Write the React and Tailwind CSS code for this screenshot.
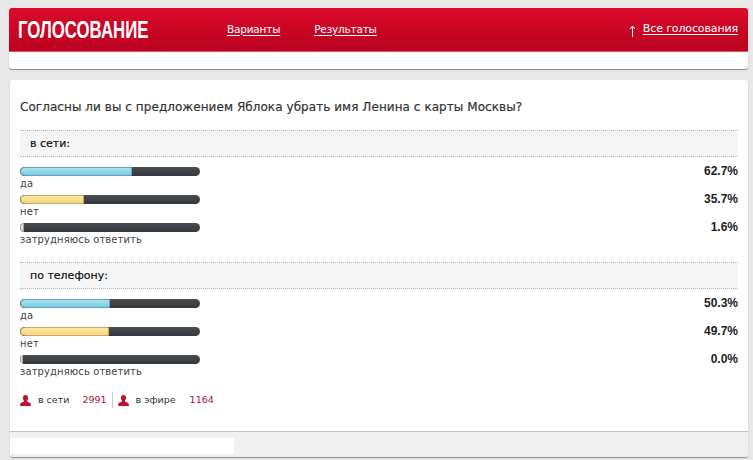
import React from 'react'

const online = [
    { label: 'да', value: '62.7%', width: 'w-[112px]', color: 'bg-gradient-to-b from-[#a8e2f2] to-[#79cbe0] border-[#5fa9bb]' },
    { label: 'нет', value: '35.7%', width: 'w-[64px]', color: 'bg-gradient-to-b from-[#fde6a6] to-[#f7d47f] border-[#c9a95f]' },
    { label: 'затрудняюсь ответить', value: '1.6%', width: 'w-[4px]', color: 'bg-gradient-to-b from-[#eeeeee] to-[#d4d4d4] border-[#aaaaaa]' },
]

const phone = [
    { label: 'да', value: '50.3%', width: 'w-[90px]', color: 'bg-gradient-to-b from-[#a8e2f2] to-[#79cbe0] border-[#5fa9bb]' },
    { label: 'нет', value: '49.7%', width: 'w-[89px]', color: 'bg-gradient-to-b from-[#fde6a6] to-[#f7d47f] border-[#c9a95f]' },
    { label: 'затрудняюсь ответить', value: '0.0%', width: 'w-[3px]', color: 'bg-gradient-to-b from-[#eeeeee] to-[#d4d4d4] border-[#aaaaaa]' },
]

const UserIcon = () => (
    <svg width="11" height="11" viewBox="0 0 12 11" preserveAspectRatio="none" className="shrink-0">
        <path d="M6 0C4.200 0 3.200 1.300 3.200 3c0 1.200.5 2.200 1.200 2.800v.8C3 7.200.6 7.600.2 9v2h11.600V9c-.4-1.400-2.800-1.800-4.200-2.400v-.8c.7-.6 1.200-1.600 1.200-2.800C8.800 1.300 7.800 0 6 0z" fill="#c1122f" />
    </svg>
)

const Section = ({ title, rows }) => (
    <div>
        <div className="h-[27px] border-y border-dotted border-[#b5b5b5] bg-[#f6f6f6] pl-[10px] text-[11px] leading-[26px] text-[#111] [-webkit-text-stroke:0.2px_#111]">{title}</div>
        <div className="mt-[10px] flex flex-col">
            {rows.map((row) => (
                <div key={row.label} className="flex h-[28px] justify-between">
                    <div>
                        <div className="h-[9px] w-[180px] overflow-hidden rounded-full bg-gradient-to-b from-[#4a4d50] to-[#33363a]">
                            <div className={`h-[9px] rounded-l-full rounded-r-[2px] border ${row.width} ${row.color}`}></div>
                        </div>
                        <div className="text-[10px] leading-[16px] tracking-[0.1px] text-[#444]">{row.label}</div>
                    </div>
                    <div className="-mt-[3px] font-['Liberation_Sans',sans-serif] text-[12px] leading-[14px] font-bold text-[#222]">{row.value}</div>
                </div>
            ))}
        </div>
    </div>
)

export default function App() {
    return (
        <div className="h-[460px] overflow-hidden bg-[#e8e8e8] pt-[8px] font-['DejaVu_Sans',sans-serif]">
            {/* Header */}
            <div className="mr-[5px] ml-[9px] rounded-[3px] bg-white shadow-[0_1px_1px_#8a8a8a]">
                <div className="flex h-[44px] items-center rounded-t-[3px] border-b border-[#e0505f] bg-gradient-to-b from-[#dc0a2a] to-[#b80320] pr-[10px] pl-[9px] text-white">
                    <h1 className="w-[209px] origin-left scale-x-[0.7] pt-[1px] font-['Liberation_Sans',sans-serif] text-[24px] font-bold whitespace-nowrap">ГОЛОСОВАНИЕ</h1>
                    <a className="text-[10.5px] tracking-[-0.2px] underline underline-offset-2">Варианты</a>
                    <a className="ml-[34px] text-[10.5px] tracking-[-0.2px] underline underline-offset-2">Результаты</a>
                    <svg width="7" height="12" viewBox="0 0 7 12" className="mt-[3px] mr-[7px] ml-auto">
                        <path d="M3.500 12V1M1 4l2.500-3L6 4" fill="none" stroke="#fff" strokeWidth="1" />
                    </svg>
                    <a className="text-[11px] tracking-[-0.13px] underline underline-offset-2">Все голосования</a>
                </div>
                <div className="h-[17px]"></div>
            </div>

            {/* Poll */}
            <div className="mt-[11px] mr-[5px] ml-[10px] h-[377px] rounded-[3px] bg-white shadow-[0_1px_1px_#8a8a8a]">
                <div className="flex h-[351px] flex-col px-[10px]">
                    <h2 className="mt-[18px] mb-[14px] text-[12px] leading-[18px] tracking-[0.06px] text-[#333] [-webkit-text-stroke:0.2px_#333]">Согласны ли вы с предложением Яблока убрать имя Ленина с карты Москвы?</h2>
                    <Section title="в сети:" rows={online} />
                    <div className="mt-[11px]">
                        <Section title="по телефону:" rows={phone} />
                    </div>
                    <div className="mt-[9px] flex items-center text-[9.5px] leading-[16px] text-[#333]">
                        <UserIcon />
                        <span className="ml-[7px]">в сети</span>
                        <span className="ml-[13px] text-[#b01030]">2991</span>
                        <span className="mx-[5px] h-[16px] w-px bg-[#ccc]"></span>
                        <UserIcon />
                        <span className="ml-[7px]">в эфире</span>
                        <span className="ml-[14px] text-[#b01030]">1164</span>
                    </div>
                </div>
                <div className="h-[26px] rounded-b-[3px] border-t border-[#c4c4c4] bg-[#f0f0f0] pt-[6px]">
                    <div className="h-[16px] w-[224px] bg-white"></div>
                </div>
            </div>
        </div>
    )
}
